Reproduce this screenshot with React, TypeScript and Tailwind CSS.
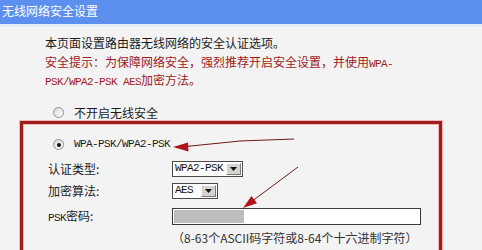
import type { ReactNode } from "react";

const cjk = { fontFamily: '"Noto Sans CJK SC", "Liberation Sans", sans-serif' };
const mono = { fontFamily: '"Liberation Mono", "Noto Sans CJK SC", monospace' };

function M({ children }: { children: ReactNode }) {
  return (
    <span className="text-[11px] leading-none tracking-[-0.6px]" style={mono}>
      {children}
    </span>
  );
}

function Radio({ checked }: { checked?: boolean }) {
  return (
    <span className="flex h-[11px] w-[11px] items-center justify-center rounded-full border border-[#8c8c8c] bg-gradient-to-br from-[#d9d9d9] to-white">
      {checked && <span className="h-[4px] w-[4px] rounded-full bg-[#111]" />}
    </span>
  );
}

function Select({ value, width }: { value: string; width: string }) {
  return (
    <div className={`flex h-[16px] ${width} items-stretch border border-[#4a4a4a] bg-white`}>
      <span className="flex flex-1 items-center pl-[2px] text-[11px] tracking-[-0.6px] text-[#111]" style={mono}>
        {value}
      </span>
      <span className="m-[1px] flex w-[15px] items-center justify-center border border-t-white border-l-white border-r-[#7a7a7a] border-b-[#7a7a7a] bg-[#d6d3ce]">
        <svg width="7" height="4" viewBox="0 0 7 4">
          <path d="M0 0h7L3.5 4z" fill="#111" />
        </svg>
      </span>
    </div>
  );
}

export default function App() {
  return (
    <div className="relative h-[250px] w-[482px] overflow-hidden bg-[#f3f3f3]" style={cjk}>
      <div className="flex h-[24px] items-center bg-[#5c8fee] pb-[2px] pl-[2px] text-[12px] text-white">
        无线网络安全设置
      </div>
      <div className="h-[3px] bg-[#e4ebf7]" />

      <div className="pl-[45px] pt-[7px] text-[12px] leading-[18px]">
        <div className="h-[18.5px] text-[#1c1c1c]">本页面设置路由器无线网络的安全认证选项。</div>
        <div className="h-[18.5px] text-[#a01b1b]">
          安全提示：为保障网络安全，强烈推荐开启安全设置，并使用<M>WPA-</M>
        </div>
        <div className="h-[18.5px] text-[#a01b1b]">
          <M>PSK/WPA2-PSK AES</M>加密方法。
        </div>
      </div>

      <div className="mt-[14px] flex h-[18px] items-center gap-[10px] pl-[53px] text-[12px] text-[#1c1c1c]">
        <Radio />
        <span>不开启无线安全</span>
      </div>

      <div className="ml-[20px] mt-[-1px] h-[140px] w-[422px] border-[3px] border-[#9e1d1d] pt-[12px] shadow-[0_0_0_1px_#f2b6b6,inset_0_0_0_1px_#f2b6b6]">
        <div className="flex h-[18px] items-center gap-[10px] pl-[30px] text-[#1c1c1c]">
          <Radio checked />
          <M>WPA-PSK/WPA2-PSK</M>
        </div>

        <div className="mt-[4px] pl-[25px] text-[12px] text-[#1c1c1c]">
          <div className="flex h-[22px] items-center">
            <span className="w-[124px]">认证类型:</span>
            <Select value="WPA2-PSK" width="w-[71px]" />
          </div>
          <div className="flex h-[22px] items-center">
            <span className="w-[124px]">加密算法:</span>
            <Select value="AES" width="w-[46px]" />
          </div>
          <div className="mt-[3px] flex h-[23px] items-center">
            <span className="w-[124px]">
              <M>PSK</M>密码:
            </span>
            <div className="flex h-[17px] w-[249px] items-stretch border border-[#3a3a3a] bg-white p-[1px]">
              <span className="w-[70px] bg-[#bdbdbd]" />
            </div>
          </div>
          <div className="mt-[1px] flex h-[18px] items-center pl-[124px] text-[#333]">
            （8-63个ASCII码字符或8-64个十六进制字符）
          </div>
        </div>
      </div>

      <svg className="pointer-events-none absolute left-0 top-0" width="482" height="250" viewBox="0 0 482 250">
        <path d="M294 139 L240 141 L186 146.5" stroke="#6e1616" strokeWidth="1" fill="none" />
        <path d="M173 147 L188 142.5 L188.5 151.5 Z" fill="#b0141a" />
        <path d="M298 167 L253 200.5" stroke="#6e1616" strokeWidth="1" fill="none" />
        <path d="M243 208 L257 203.2 L251.5 196 Z" fill="#b0141a" />
      </svg>
    </div>
  );
}
